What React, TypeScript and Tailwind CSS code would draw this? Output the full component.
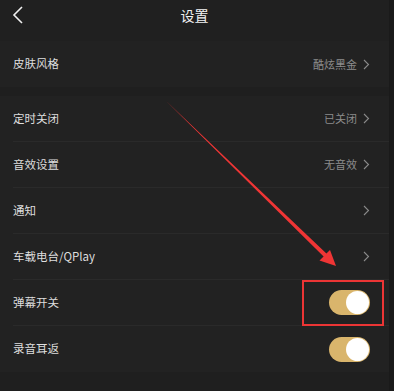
import React from 'react';

const font = { fontFamily: '"Noto Sans CJK SC", "Noto Sans", sans-serif' };

function Chevron() {
  return (
    <svg width="7" height="11" viewBox="0 0 7 11" className="ml-[6px]">
      <path d="M1 1 L5.5 5.5 L1 10" fill="none" stroke="#8a8a8a" strokeWidth="1.1" />
    </svg>
  );
}

function Toggle() {
  return (
    <div className="w-[41px] h-[25px] rounded-full bg-[#d9b56c] flex items-center justify-end pr-[1px]">
      <div className="w-[23px] h-[23px] rounded-full bg-white" />
    </div>
  );
}

type Row = { label: string; value?: string; toggle?: boolean; chevron?: boolean };

function SettingRow({ row, divider }: { row: Row; divider: boolean }) {
  return (
    <div className="h-[46px] pl-[13px] flex flex-col">
      <div className="flex-1 flex items-center pr-[19px]">
        <span className="text-[11.5px] text-[#dedede] flex-1">{row.label}</span>
        {row.value && <span className="text-[11px] text-[#8c8c8c]">{row.value}</span>}
        {row.chevron && <Chevron />}
        {row.toggle && <Toggle />}
      </div>
      {divider && <div className="h-px bg-[#2a2a2a]" />}
    </div>
  );
}

const rows: Row[] = [
  { label: '定时关闭', value: '已关闭', chevron: true },
  { label: '音效设置', value: '无音效', chevron: true },
  { label: '通知', chevron: true },
  { label: '车载电台/QPlay', chevron: true },
  { label: '弹幕开关', toggle: true },
  { label: '录音耳返', toggle: true },
];

export default function App() {
  return (
    <div className="relative w-[394px] h-[391px] overflow-hidden flex bg-[#1f1f1f]" style={font}>
      <div className="w-[389px] flex flex-col">
        <div className="h-[33px] bg-[#202020] relative flex items-center justify-center pb-[3px]">
          <svg width="12" height="18" viewBox="0 0 12 18" className="absolute left-[12px] top-[6px]">
            <path d="M10 1 L2 9 L10 17" fill="none" stroke="#f0f0f0" strokeWidth="1.6" />
          </svg>
          <span className="text-[14px] text-[#f2f2f2]">设置</span>
        </div>
        <div className="h-[8px] bg-[#202020]" />
        <div className="bg-[#222222]">
          <SettingRow row={{ label: '皮肤风格', value: '酷炫黑金', chevron: true }} divider={false} />
        </div>
        <div className="h-[9px] bg-[#1f1f1f]" />
        <div className="bg-[#222222]">
          {rows.map((r, i) => (
            <SettingRow key={r.label} row={r} divider={i < rows.length - 1} />
          ))}
        </div>
        <div className="flex-1 bg-[#1f1f1f]" />
      </div>
      <div className="w-[5px] bg-[#1a1a1a]" />

      {/* annotation arrow */}
      <svg width="394" height="391" className="absolute left-0 top-0 pointer-events-none">
        <path
          d="M165.6 100.6 L326.4 253.6 L330 250 L336 266 L319.5 260.5 L323.6 256.4 Z"
          fill="#ef3535"
        />
      </svg>
      {/* annotation box */}
      <div className="absolute left-[302px] top-[280px] w-[82px] h-[46px] border-2 border-[#ec3535]" />
    </div>
  );
}
